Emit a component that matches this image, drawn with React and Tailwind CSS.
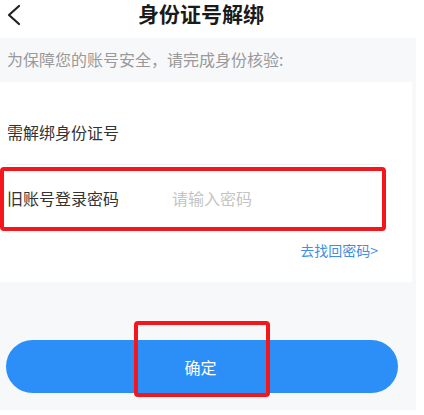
import React from 'react';

const font = { fontFamily: '"Noto Sans CJK SC", "Noto Sans", sans-serif' };

const App = () => {
  return (
    <div className="relative w-[424px] h-[415px] bg-white overflow-hidden" style={font}>
      <div className="w-[416px]">
        {/* header */}
        <div className="h-[38px] flex items-start bg-white">
          <button className="ml-[5px] mt-[4px] w-[18px] h-[22px] flex items-center justify-center">
            <svg width="16" height="22" viewBox="0 0 16 22" fill="none" stroke="#222" strokeWidth="2.2" strokeLinecap="round" strokeLinejoin="round">
              <path d="M13 2 L3 11 L13 20" />
            </svg>
          </button>
          <h1 className="ml-[115px] mt-[1px] text-[21px] leading-[24px] font-bold text-[#1a1a1a]">身份证号解绑</h1>
        </div>

        <div className="bg-[#f7f8fa]">
          {/* tip */}
          <div className="h-[44px] flex items-center pl-[7px] pb-[2px] text-[16px] text-[#999]">
            为保障您的账号安全，请完成身份核验:
          </div>

          {/* card */}
          <div className="w-[412px] bg-white pt-[18px] pb-[22px]">
            <div className="h-[64px] flex items-center pl-[7px] text-[16px] text-[#333]">需解绑身份证号</div>
            <div className="ml-[7px] mr-[32px] h-px bg-[#f0f0f0]" />
            <div className="h-[66px] flex items-center pl-[7px] text-[16px]">
              <span className="w-[165px] text-[#333]">旧账号登录密码</span>
              <span className="text-[#c4c4c4]">请输入密码</span>
            </div>
            <div className="h-[20px] mt-[9px] flex justify-end pr-[34px] text-[14px] leading-[20px] text-[#3b8fe6]">
              去找回密码&gt;
            </div>
          </div>

          {/* button */}
          <div className="pt-[58px] pb-[17px] pl-[6px]">
            <button className="w-[392px] h-[53px] rounded-full bg-[#2c8ff8] text-white text-[16px] flex items-center justify-center pr-[3px]">
              确定
            </button>
          </div>
        </div>
      </div>

      {/* red annotation boxes */}
      <div className="absolute left-0 top-[167px] w-[386px] h-[64px] border-[4px] border-[#f5161b] rounded-[4px]" />
      <div className="absolute left-[134px] top-[321px] w-[136px] h-[76px] border-[4px] border-[#f5161b] rounded-[4px]" />
    </div>
  );
};

export default App;
